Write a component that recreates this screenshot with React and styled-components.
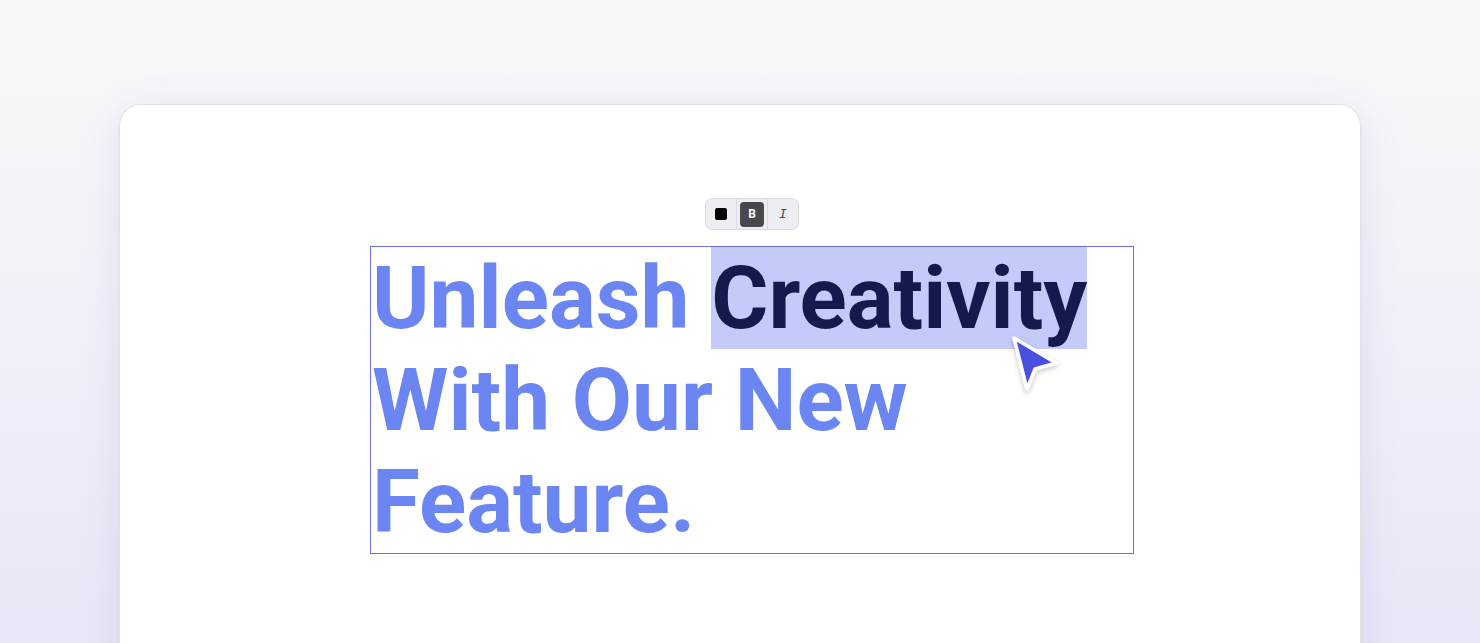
import React from 'react'
import styled, { createGlobalStyle } from 'styled-components'

const GlobalStyle = createGlobalStyle`
    html, body {
        margin: 0;
        padding: 0;
        height: 100%;
    }
    body {
        font-family: Roboto, "Liberation Sans", sans-serif;
        overflow: hidden;
    }
`;

export default function App() {
    return (
        <>
            <GlobalStyle />
            <Page>
                <Card>
                    <Editor>
                        <Toolbar>
                            <ToolSlot>
                                <Swatch />
                            </ToolSlot>
                            <ToolSlot>
                                <BoldButton>B</BoldButton>
                            </ToolSlot>
                            <ToolSlot>
                                <ItalicGlyph>I</ItalicGlyph>
                            </ToolSlot>
                        </Toolbar>
                        <TextBox>
                            <Heading>
                                Unleash <Selected>Creativity</Selected>
                                <br />
                                With Our New
                                <br />
                                Feature.
                            </Heading>
                            <Pointer />
                        </TextBox>
                    </Editor>
                </Card>
            </Page>
        </>
    )
}

function Pointer() {
    return (
        <PointerSvg width="64" height="68" viewBox="0 0 64 68">
            <defs>
                <filter id="ptr-shadow" x="-30%" y="-30%" width="160%" height="160%">
                    <feDropShadow dx="0" dy="2" stdDeviation="2.5" floodColor="#1e1b4b" floodOpacity="0.25" />
                </filter>
            </defs>
            <path
                d="M6 5 L48 30 L27 36 L19 56 Z"
                fill="#4c4fe0"
                stroke="#ffffff"
                strokeWidth="3.5"
                strokeLinejoin="round"
                filter="url(#ptr-shadow)"
            />
        </PointerSvg>
    )
}

const Page = styled.div`
    height: 643px;
    overflow: hidden;
    background: linear-gradient(180deg, #f8f8fa 0%, #f1f0f8 50%, #e9e6f7 100%);
    padding-top: 104px;
    box-sizing: border-box;
`;

const Card = styled.div`
    margin: 0 119px;
    height: 620px;
    background: #ffffff;
    border: 1px solid #e2e2e8;
    border-radius: 22px;
    box-shadow: 0 8px 40px rgba(96, 86, 170, 0.12), 0 1px 3px rgba(0, 0, 0, 0.04);
    box-sizing: border-box;
    padding-top: 93px;
`;

const Editor = styled.div`
    width: 764px;
    margin-left: 250px;
    display: flex;
    flex-direction: column;
    align-items: center;
    gap: 16px;
`;

const Toolbar = styled.div`
    display: flex;
    height: 32px;
    box-sizing: border-box;
    background: #eceef1;
    border: 1px solid #d9dbdf;
    border-radius: 7px;
    overflow: hidden;
`;

const ToolSlot = styled.div`
    width: 30px;
    display: flex;
    align-items: center;
    justify-content: center;
    & + & {
        border-left: 1px solid #d9dbdf;
    }
`;

const Swatch = styled.div`
    width: 12px;
    height: 12px;
    border-radius: 2px;
    background: #000000;
`;

const BoldButton = styled.div`
    width: 24px;
    height: 25px;
    border-radius: 4px;
    background: #46484c;
    color: #ffffff;
    font-family: Roboto, sans-serif;
    font-weight: 700;
    font-size: 12px;
    display: flex;
    align-items: center;
    justify-content: center;
`;

const ItalicGlyph = styled.span`
    font-family: "Liberation Mono", monospace;
    font-style: italic;
    font-size: 13px;
    color: #4a4c50;
`;

const TextBox = styled.div`
    position: relative;
    width: 100%;
    box-sizing: border-box;
    border: 1.5px solid #6a70e4;
    padding: 0 1px;
`;

const Heading = styled.h1`
    margin: 0;
    font-family: Roboto, "Liberation Sans", sans-serif;
    font-weight: 700;
    font-size: 87.4px;
    line-height: 102px;
    letter-spacing: 0;
    color: #6b85f2;
`;

const Selected = styled.span`
    background: #c4cbf8;
    color: #141a4b;
`;

const PointerSvg = styled.svg`
    position: absolute;
    left: 637px;
    top: 86px;
    overflow: visible;
`;
